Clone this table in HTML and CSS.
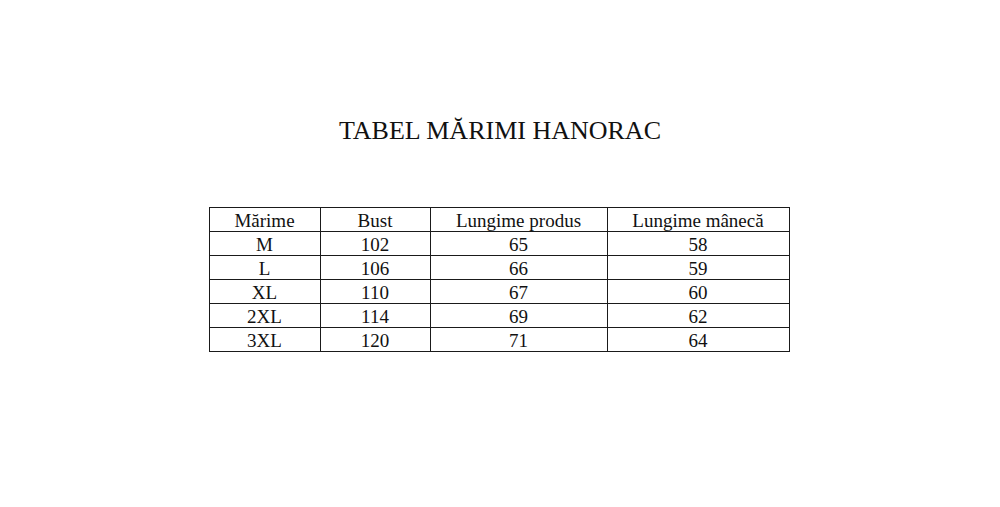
FILE: index.html
```html
<!DOCTYPE html>
<html lang="ro">
<head>
<meta charset="utf-8">
<title>Tabel mărimi hanorac</title>
<link rel="stylesheet" href="styles.css">
</head>
<body>
<main class="page">
  <h1 class="title">TABEL MĂRIMI HANORAC</h1>
  <table class="sizes">
    <colgroup>
      <col class="c1"><col class="c2"><col class="c3"><col class="c4">
    </colgroup>
    <thead>
      <tr><th>Mărime</th><th>Bust</th><th>Lungime produs</th><th>Lungime mânecă</th></tr>
    </thead>
    <tbody>
      <tr><td>M</td><td>102</td><td>65</td><td>58</td></tr>
      <tr><td>L</td><td>106</td><td>66</td><td>59</td></tr>
      <tr><td>XL</td><td>110</td><td>67</td><td>60</td></tr>
      <tr><td>2XL</td><td>114</td><td>69</td><td>62</td></tr>
      <tr><td>3XL</td><td>120</td><td>71</td><td>64</td></tr>
    </tbody>
  </table>
</main>
</body>
</html>
```
FILE: styles.css
```css
html, body {
  margin: 0;
  padding: 0;
  background: #ffffff;
}
body {
  font-family: "Liberation Serif", "Times New Roman", serif;
  color: #111111;
}
.page {
  width: 1000px;
  height: 507px;
  display: flex;
  flex-direction: column;
  align-items: center;
  padding-top: 116px;
  box-sizing: border-box;
}
.title {
  margin: 0;
  font-size: 26px;
  font-weight: normal;
  line-height: 30px;
  letter-spacing: 0;
}
.sizes {
  margin-top: 61px;
  margin-left: -2px;
  border-collapse: collapse;
  table-layout: fixed;
  width: 581px;
  font-size: 19px;
}
.c1 { width: 111px; }
.c2 { width: 110px; }
.c3 { width: 177px; }
.c4 { width: 182px; }
.sizes th,
.sizes td {
  border: 1px solid #1a1a1a;
  padding: 3px 0 0;
  height: 20px;
  line-height: 20px;
  text-align: center;
  font-weight: normal;
  vertical-align: top;
  box-sizing: content-box;
  white-space: nowrap;
}
```
